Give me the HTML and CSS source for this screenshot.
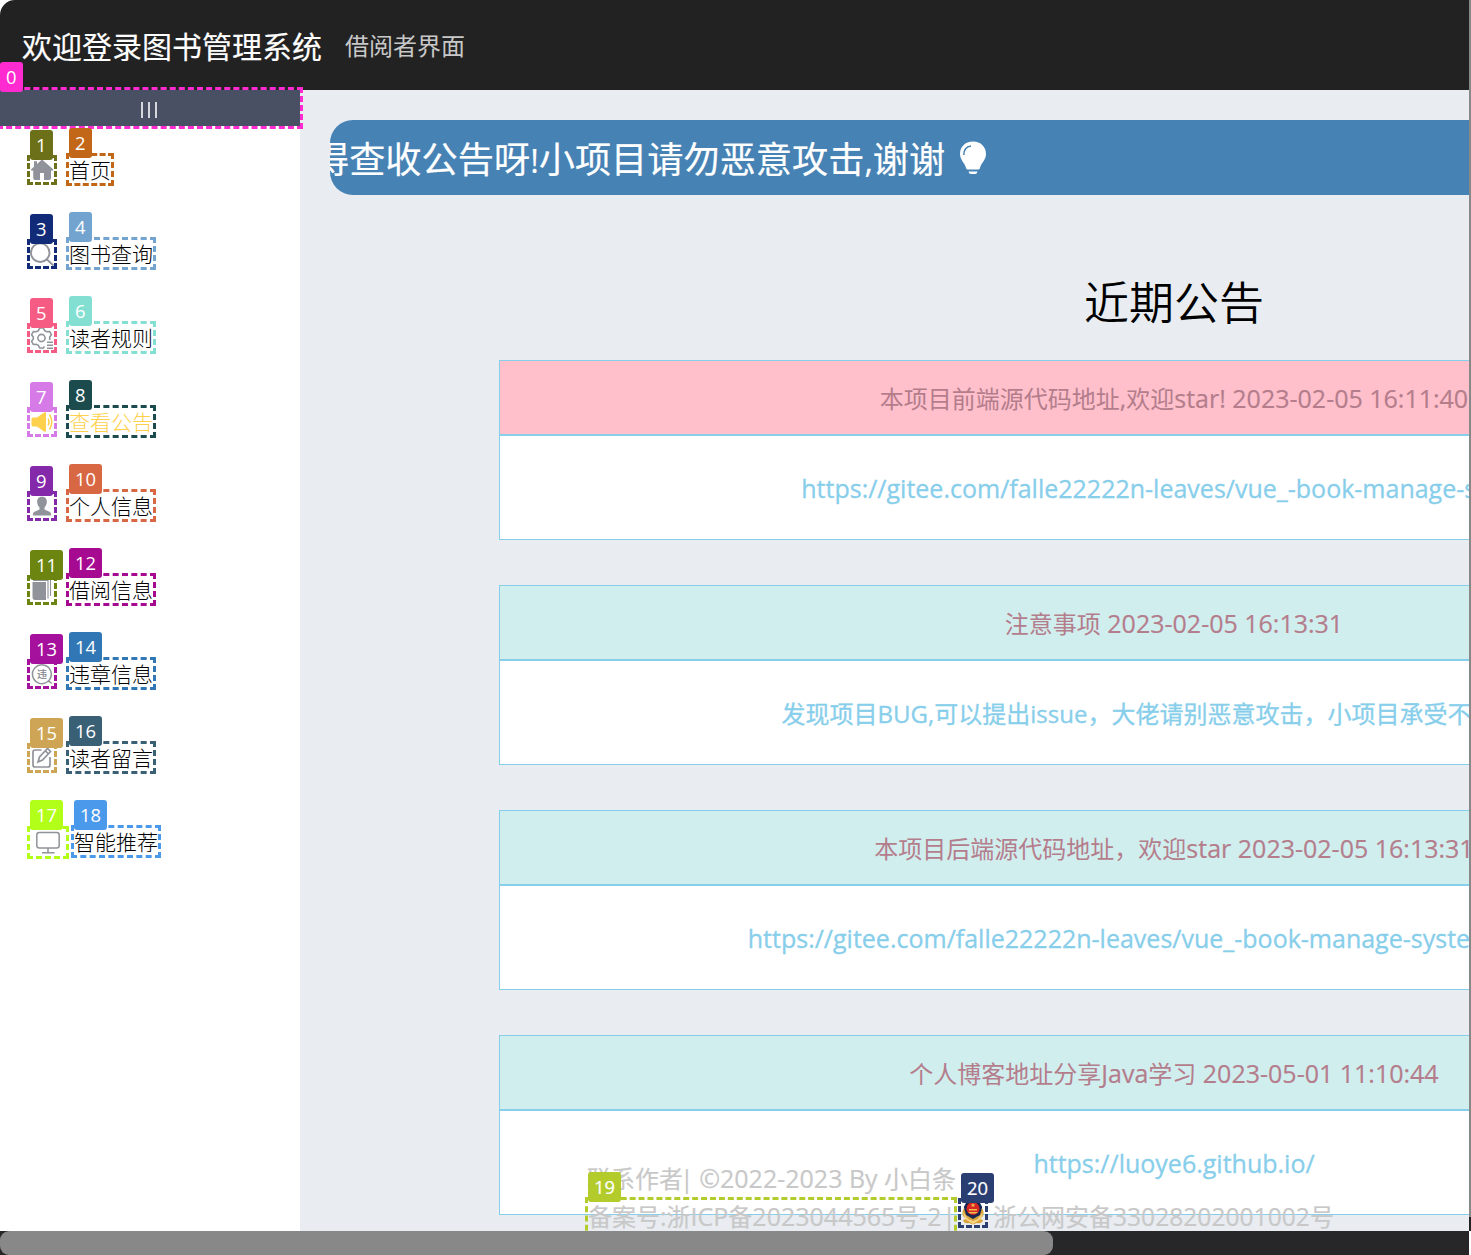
FILE: index.html
```html
<!DOCTYPE html>
<html lang="zh-CN">
<head>
<meta charset="utf-8">
<title>图书管理系统</title>
<link rel="stylesheet" href="styles.css">
</head>
<body>
<div class="viewport">
  <header class="topbar"><h1>欢迎登录图书管理系统</h1><span>借阅者界面</span></header>
  <div class="layout">
    <aside class="sidebar">
      <div class="collapse mark c0"><b class="tag">0</b><i></i><i></i><i></i></div>
      <ul class="menu">
        <li><span class="icon mark c1"><b class="tag">1</b><svg viewBox="0 0 24 24"><path fill="#909399" d="M12 1.500 7 6V3.200H4v5.500L.8 11.600 2 13l1.200-.8V20q0 2 2 2H10v-7h4v7h5q2 0 2-2v-7.800l1.200.8 1.200-1.400z"/></svg></span><span class="label mark c2"><b class="tag">2</b>首页</span></li>
        <li><span class="icon mark c3"><b class="tag">3</b><svg viewBox="0 0 24 24" fill="none" stroke="#909399" stroke-width="1.900"><circle cx="10.200" cy="10.700" r="9.300"/><path d="m17 17.500 6.500 6"/></svg></span><span class="label mark c4"><b class="tag">4</b>图书查询</span></li>
        <li><span class="icon mark c5"><b class="tag">5</b><svg viewBox="0 0 24 24" fill="none" stroke="#909399" stroke-width="1.600"><circle cx="11.500" cy="12" r="3.600"/><path d="M14.500 20.500 13.300 22H9.700L8.300 19.300 6.300 18.200 3.300 18.500 1.600 15.300 3.300 13V11L1.600 8.600 3.400 5.500 6.400 5.800 8.400 4.600 9.700 2h3.600l1.400 2.600 2 1.200 3-.3 1.700 3.100L19.700 11v3M17 16.200h6M17 19.200h6M17 22.200h6"/></svg></span><span class="label mark c6"><b class="tag">6</b>读者规则</span></li>
        <li class="active"><span class="icon mark c7"><b class="tag">7</b><svg viewBox="0 0 24 24"><path fill="#ffd04b" d="M3 7.500H7L14 2.500q2-.8 2 1v17q0 1.800-2 1l-7-5H3Q1.500 16.500 1.500 15V9q0-1.500 1.500-1.500"/><path fill="none" stroke="#ffd04b" stroke-width="1.500" d="M18 8.500q2 3.500 0 7M19.500 4.500q4.500 7.500 0 15"/></svg></span><span class="label mark c8"><b class="tag">8</b>查看公告</span></li>
        <li><span class="icon mark c9"><b class="tag">9</b><svg viewBox="0 0 24 24"><path fill="#909399" d="M12 2.800c-6 0-6 7-2.500 10.700v2L4 18q-1.200.8-1.200 3.500h18.400q0-2.700-1.200-3.500l-5.500-2.500v-2C18 9.800 18 2.800 12 2.800"/></svg></span><span class="label mark c10"><b class="tag">10</b>个人信息</span></li>
        <li><span class="icon mark c11"><b class="tag">11</b><svg viewBox="0 0 24 24"><path fill="#909399" d="M2.500 4h13.500v18H5Q2.500 22 2.500 19z"/><path fill="none" stroke="#909399" stroke-width="1.100" d="M3 2.500h15v18M5 1h15.500v17"/></svg></span><span class="label mark c12"><b class="tag">12</b>借阅信息</span></li>
        <li><span class="icon mark c13"><b class="tag">13</b><svg viewBox="0 0 24 24"><path fill="none" stroke="#909399" stroke-width="1.500" d="M17.800 19.500A9.400 9.400 0 1 1 19.500 17.700L17.800 19.500h1.500l2.500 2"/><text x="12" y="15.700" text-anchor="middle" font-size="10" font-weight="700" fill="#909399">违</text></svg></span><span class="label mark c14"><b class="tag">14</b>违章信息</span></li>
        <li><span class="icon mark c15"><b class="tag">15</b><svg viewBox="0 0 24 24" fill="none" stroke="#909399" stroke-width="1.700"><path d="M11.500 4H5Q3 4 3 6v13q0 2 2 2h13q2 0 2-2v-8"/><path d="m8 16 1.500-5 8-8.500 3 3-8 8.500zM15.500 5l3 3"/></svg></span><span class="label mark c16"><b class="tag">16</b>读者留言</span></li>
        <li><span class="icon wide mark c17"><b class="tag">17</b><svg viewBox="0 0 24 24" fill="none" stroke="#909399" stroke-width="1.500"><rect x=".8" y="2.500" width="22.400" height="15.500" rx="2.500"/><path d="M12 18v4.500M6 22.700h12.500"/></svg></span><span class="label mark c18"><b class="tag">18</b>智能推荐</span></li>
      </ul>
    </aside>
    <main class="content">
      <div class="banner"><p>得查收公告呀<span class="en">!</span>小项目请勿恶意攻击<span class="en">,</span>谢谢</p><svg viewBox="0 0 28 36"><path fill="#fff" d="M14 1.500C6 1.500 1 7 1 14c0 6 5 9 6 14q.3 1.500 2 1.500h10q1.700 0 2-1.500c1-5 6-8 6-14C27 7 22 1.500 14 1.500M9.500 31.500h9q-.5 2.500-2.500 2.500h-4q-2 0-2.500-2.500"/><path fill="none" stroke="#4682b4" stroke-width="1.500" d="M4.800 15q0-8 7.200-9"/></svg></div>
      <h2>近期公告</h2>
      <section class="notice first"><h3>本项目前端源代码地址<span class="en">,</span>欢迎<span class="en">star! 2023-02-05 16:11:40</span></h3><p><span class="en">https://gitee.com/falle22222n-leaves/vue_-book-manage-system</span></p></section>
      <section class="notice"><h3>注意事项<span class="en"> 2023-02-05 16:13:31</span></h3><p class="mixed">发现项目<span class="en">BUG,</span>可以提出<span class="en">issue</span>，大佬请别恶意攻击，小项目承受不起攻击<span class="en">!!!</span></p></section>
      <section class="notice"><h3>本项目后端源代码地址，欢迎<span class="en">star 2023-02-05 16:13:31</span></h3><p><span class="en">https://gitee.com/falle22222n-leaves/vue_-book-manage-system-backend</span></p></section>
      <section class="notice"><h3>个人博客地址分享<span class="en">Java</span>学习<span class="en"> 2023-05-01 11:10:44</span></h3><p><span class="en">https://luoye6.github.io/</span></p></section>
    </main>
  </div>
  <footer class="footer">
    <div>联系作者<span class="en"><span class="bar">|</span> ©2022-2023 By </span>小白条</div>
    <div class="records"><span class="record mark c19"><b class="tag">19</b>备案号<span class="en">:</span>浙<span class="en">ICP</span>备<span class="en">2023044565</span>号<span class="en">-2 <span class="bar">|</span></span></span><span class="badge mark c20"><b class="tag">20</b><svg viewBox="0 0 24 24"><path fill="#d9a33c" d="M3 7q-4 7 2 11l-3 1q1 4 6 3l4 1.500 4-1.500q5 1 6-3l-3-1q6-4 2-11l-5 9h-8z"/><path fill="#f4d382" d="m2 11 5 7 5 2 5-2 5-7-2 7-8 5-8-5z"/><path fill="#172650" d="M12 0 5 2 2.800 6 5 14l7 4 7-4 2.200-8L19 2z"/><circle cx="12" cy="7.500" r="6.500" fill="#d92622"/><path fill="#f1c04e" d="m12 2 .7 1.500h1.600l-1.300 1 .5 1.600L12 5.200l-1.500.9.500-1.600-1.300-1h1.600zM8 8h8v1.500H8zM7 11h10l-2 1.500H9z"/></svg></span><span class="police">浙公网安备<span class="en">33028202001002</span>号</span></div>
  </footer>
</div>
<div class="vbar"><i></i></div>
<div class="hbar"><i></i></div>
</body>
</html>
```
FILE: styles.css
```css
* { box-sizing: border-box; }
body {
  margin: 0;
  width: 1471px;
  height: 1255px;
  overflow: hidden;
  display: grid;
  grid-template: 1231px 24px / 1469px 2px;
  background: #fff;
  font-family: "Noto Sans CJK SC", sans-serif;
  font-size: 24px;
}
h1, h2, h3, p, ul { margin: 0; padding: 0; font-weight: 400; }
svg { display: block; }
.en { font-family: "Open Sans", "Noto Sans", sans-serif; font-size: 1.042em; white-space: pre; -webkit-text-stroke: .2px currentColor; }
.viewport { position: relative; overflow: hidden; }
.topbar {
  height: 90px;
  display: flex;
  align-items: center;
  gap: 23px;
  padding: 0 22px 0 22px;
  background: #222;
  border-top-left-radius: 15px;
  color: #fff;
}
.topbar h1 { font-size: 30px; line-height: 45px; -webkit-text-stroke: .15px currentColor; }
.topbar span { color: #c8c8c8; line-height: 36px; }
.layout { display: grid; grid-template-columns: 300px 1748px; height: 1141px; }
.sidebar { background: #fff; }
.collapse {
  height: 36px;
  display: flex;
  align-items: center;
  justify-content: center;
  gap: 5px;
  padding: 4px 3px 0 0;
  background: #4a5064;
}
.collapse i { width: 2px; height: 16px; background: #d5d7dc; }
.menu { list-style: none; }
.menu li { height: 84px; padding: 3px 0 0 30px; display: flex; align-items: center; color: #000; font-size: 21px; }
.menu .active { color: #ffd04b; }
.icon { width: 24px; height: 24px; margin-right: 15px; }
.icon.wide { width: 36px; height: 27px; margin: 2px 8px 0 0; padding: 1px 6px 0; }
.icon svg { width: 24px; height: 24px; }
.label { height: 27px; line-height: 27px; font-weight: 300; }
.content { background: #e9edf2; padding: 30px 30px 0; }
.banner {
  height: 75px;
  display: flex;
  align-items: center;
  gap: 14px;
  overflow: hidden;
  background: #4682b4;
  border-radius: 23px;
  color: #fff;
  font-size: 36.200px;
  -webkit-text-stroke: .2px currentColor;
}
.banner p { line-height: 54px; margin: 2px 0 0 -17px; white-space: nowrap; }
.banner .en { font-size: .9em; }
.banner svg { width: 28px; height: 36px; margin-top: 1px; }
.content h2 { margin: 70px 0 23px; font-size: 45px; line-height: 72px; text-align: center; font-weight: 350; }
.notice { width: 1350px; height: 180px; margin: 0 auto 45px; text-align: center; white-space: nowrap; }
.notice h3 { height: 75px; line-height: 73px; font-size: 24px; border: 1px solid skyblue; background: #d1eeee; color: #b47d8c; }
.notice.first h3 { background: pink; }
.notice p { height: 105px; line-height: 103px; border: 1px solid skyblue; background: #fff; color: skyblue; -webkit-text-stroke: .3px currentColor; }
.notice p .en { -webkit-text-stroke: .3px currentColor; }
.notice .mixed .en { font-size: 1em; }
.notice .mixed { padding-right: 4px; }
.footer { position: absolute; left: 587px; top: 1159px; color: #c8c8c8; line-height: 37px; white-space: nowrap; -webkit-text-stroke: .2px currentColor; }
.bar { margin: 0 -1px 0 -3px; }
.records { display: flex; align-items: flex-start; padding-left: 1px; }
.record { width: 366px; height: 37px; margin-right: 7px; margin-top: 3px; line-height: 32px; }
.record .bar { margin-left: -6px; }
.badge { width: 24px; height: 24px; margin: 4px 8px 0 0; line-height: 30px; }
.badge svg { width: 24px; height: 24px; }
.police { line-height: 38px; }
.police .en { font-size: 1.025em; }
.mark { position: relative; flex-shrink: 0; }
.mark::after { content: ""; position: absolute; inset: -3px; border: 3px dashed var(--tone); }
.tag {
  position: absolute;
  z-index: 2;
  left: 0;
  top: -28px;
  height: 30px;
  padding: 0 6px;
  border-radius: 3px;
  background: var(--tone);
  color: #fff;
  font: 400 18.400px/30px "Open Sans", sans-serif;
}
.c17 .tag { top: -29px; }
.c0 { --tone: #ff2bd0; }
.c1 { --tone: #6c7119; }
.c2 { --tone: #c26717; }
.c3 { --tone: #122b78; }
.c4 { --tone: #73a3cf; }
.c5 { --tone: #f65c83; }
.c6 { --tone: #83dfd1; }
.c7 { --tone: #d57ae7; }
.c8 { --tone: #1c4b4d; }
.c9 { --tone: #8529ab; }
.c10 { --tone: #d86744; }
.c11 { --tone: #6c8511; }
.c12 { --tone: #a60a91; }
.c13 { --tone: #a5109c; }
.c14 { --tone: #3277b5; }
.c15 { --tone: #cda554; }
.c16 { --tone: #3a6076; }
.c17 { --tone: #b2ff19; }
.c18 { --tone: #4b99eb; }
.c19 { --tone: #b3cc2b; }
.c20 { --tone: #2b3e72; }
.vbar { background: #222; }
.vbar i { display: block; height: 1217px; background: #888; }
.hbar { background: #272729; }
.hbar i { display: block; width: 1053px; height: 24px; border-radius: 9px; background: #888; }
```
